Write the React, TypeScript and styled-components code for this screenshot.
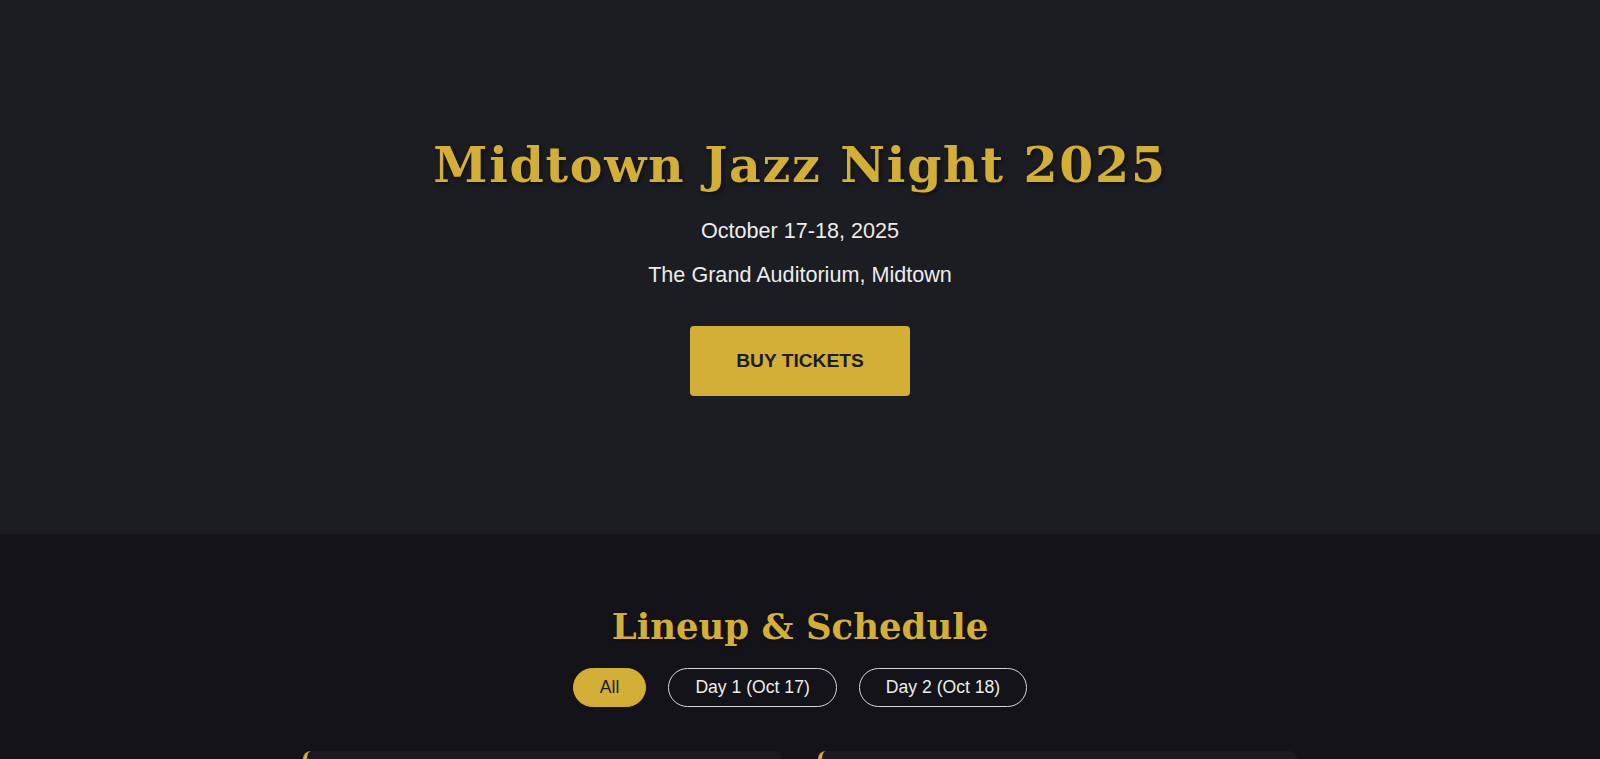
import { useState } from 'react'
import styled, { createGlobalStyle } from 'styled-components'

const gold = '#d4af37'

const GlobalStyle = createGlobalStyle`
  * {
    box-sizing: border-box;
  }

  body {
    margin: 0;
    background: #141319;
    color: #e8e8e8;
    font-family: 'Liberation Sans', Arial, sans-serif;
  }
`

type Act = {
  id: number
  day: 1 | 2
  time: string
  artist: string
  stage: string
}

const acts: Act[] = [
  { id: 1, day: 1, time: '7:00 PM', artist: 'The Blue Note Quartet', stage: 'Main Stage' },
  { id: 2, day: 1, time: '8:30 PM', artist: 'Ella Marie & The Swing Band', stage: 'Main Stage' },
  { id: 3, day: 2, time: '7:00 PM', artist: 'Midnight Brass Collective', stage: 'Main Stage' },
  { id: 4, day: 2, time: '8:30 PM', artist: 'Marcus Hale Trio', stage: 'Lounge' },
]

const filters = [
  { key: 'all', label: 'All' },
  { key: '1', label: 'Day 1 (Oct 17)' },
  { key: '2', label: 'Day 2 (Oct 18)' },
]

const App = () => {
  const [filter, setFilter] = useState<string>('all')

  const visibleActs = acts.filter(
    act => filter === 'all' || String(act.day) === filter,
  )

  return (
    <>
      <GlobalStyle />
      <Hero>
        <HeroTitle>Midtown Jazz Night 2025</HeroTitle>
        <HeroDate>October 17-18, 2025</HeroDate>
        <HeroVenue>The Grand Auditorium, Midtown</HeroVenue>
        <TicketButton>BUY TICKETS</TicketButton>
      </Hero>
      <LineupSection>
        <SectionTitle>Lineup &amp; Schedule</SectionTitle>
        <FilterBar>
          {filters.map(f => (
            <FilterButton
              key={f.key}
              $active={filter === f.key}
              onClick={() => setFilter(f.key)}
            >
              {f.label}
            </FilterButton>
          ))}
        </FilterBar>
        <ActGrid>
          {visibleActs.map(act => (
            <ActCard key={act.id}>
              <ActTime>
                Day {act.day} · {act.time}
              </ActTime>
              <ActName>{act.artist}</ActName>
              <ActStage>{act.stage}</ActStage>
            </ActCard>
          ))}
        </ActGrid>
      </LineupSection>
    </>
  )
}

export default App

const Hero = styled.header`
  background: #1c1d22;
  height: 534px;
  display: flex;
  flex-direction: column;
  align-items: center;
  justify-content: center;
  text-align: center;
  padding-bottom: 2px;
`

const HeroTitle = styled.h1`
  margin: 0 0 24px;
  font-family: 'DejaVu Serif', Georgia, serif;
  font-weight: 700;
  font-size: 49px;
  line-height: 1.2;
  letter-spacing: 1.7px;
  color: ${gold};
  text-shadow: 2px 2px 4px rgba(0, 0, 0, 0.5);
`

const HeroDate = styled.p`
  margin: 0 0 19px;
  font-size: 21.6px;
  line-height: 1.15;
  color: #ececec;
`

const HeroVenue = styled(HeroDate)`
  margin-bottom: 38px;
`

const TicketButton = styled.button`
  width: 220px;
  height: 70px;
  border: none;
  border-radius: 4px;
  background: ${gold};
  color: #1c1d22;
  font-family: 'Liberation Sans', Arial, sans-serif;
  font-weight: 700;
  font-size: 19.2px;
  cursor: pointer;
`

const LineupSection = styled.section`
  background: #141319;
  padding: 72px 0 80px;
  display: flex;
  flex-direction: column;
  align-items: center;
`

const SectionTitle = styled.h2`
  margin: 0 0 19px;
  font-family: 'DejaVu Serif', Georgia, serif;
  font-weight: 700;
  font-size: 35.5px;
  line-height: 1.2;
  color: ${gold};
  text-shadow: 1px 1px 2px rgba(0, 0, 0, 0.5);
`

const FilterBar = styled.div`
  display: flex;
  gap: 22px;
  margin-bottom: 44px;
`

const FilterButton = styled.button<{ $active: boolean }>`
  height: 39px;
  padding: 0 26px;
  border-radius: 20px;
  border: 1px solid ${p => (p.$active ? gold : '#d6d6d6')};
  background: ${p => (p.$active ? gold : 'transparent')};
  color: ${p => (p.$active ? '#1c1d22' : '#ececec')};
  font-family: 'Liberation Sans', Arial, sans-serif;
  font-size: 17.6px;
  cursor: pointer;
`

const ActGrid = styled.div`
  display: grid;
  grid-template-columns: repeat(2, 479px);
  gap: 36px;
`

const ActCard = styled.div`
  background: #1b1b21;
  border-left: 4px solid ${gold};
  border-radius: 8px;
  padding: 28px 28px 24px;
`

const ActTime = styled.div`
  font-size: 14px;
  color: ${gold};
  margin-bottom: 8px;
`

const ActName = styled.h3`
  margin: 0 0 6px;
  font-family: 'DejaVu Serif', Georgia, serif;
  font-size: 22px;
  color: #f0f0f0;
`

const ActStage = styled.div`
  font-size: 15px;
  color: #a8a8b0;
`
